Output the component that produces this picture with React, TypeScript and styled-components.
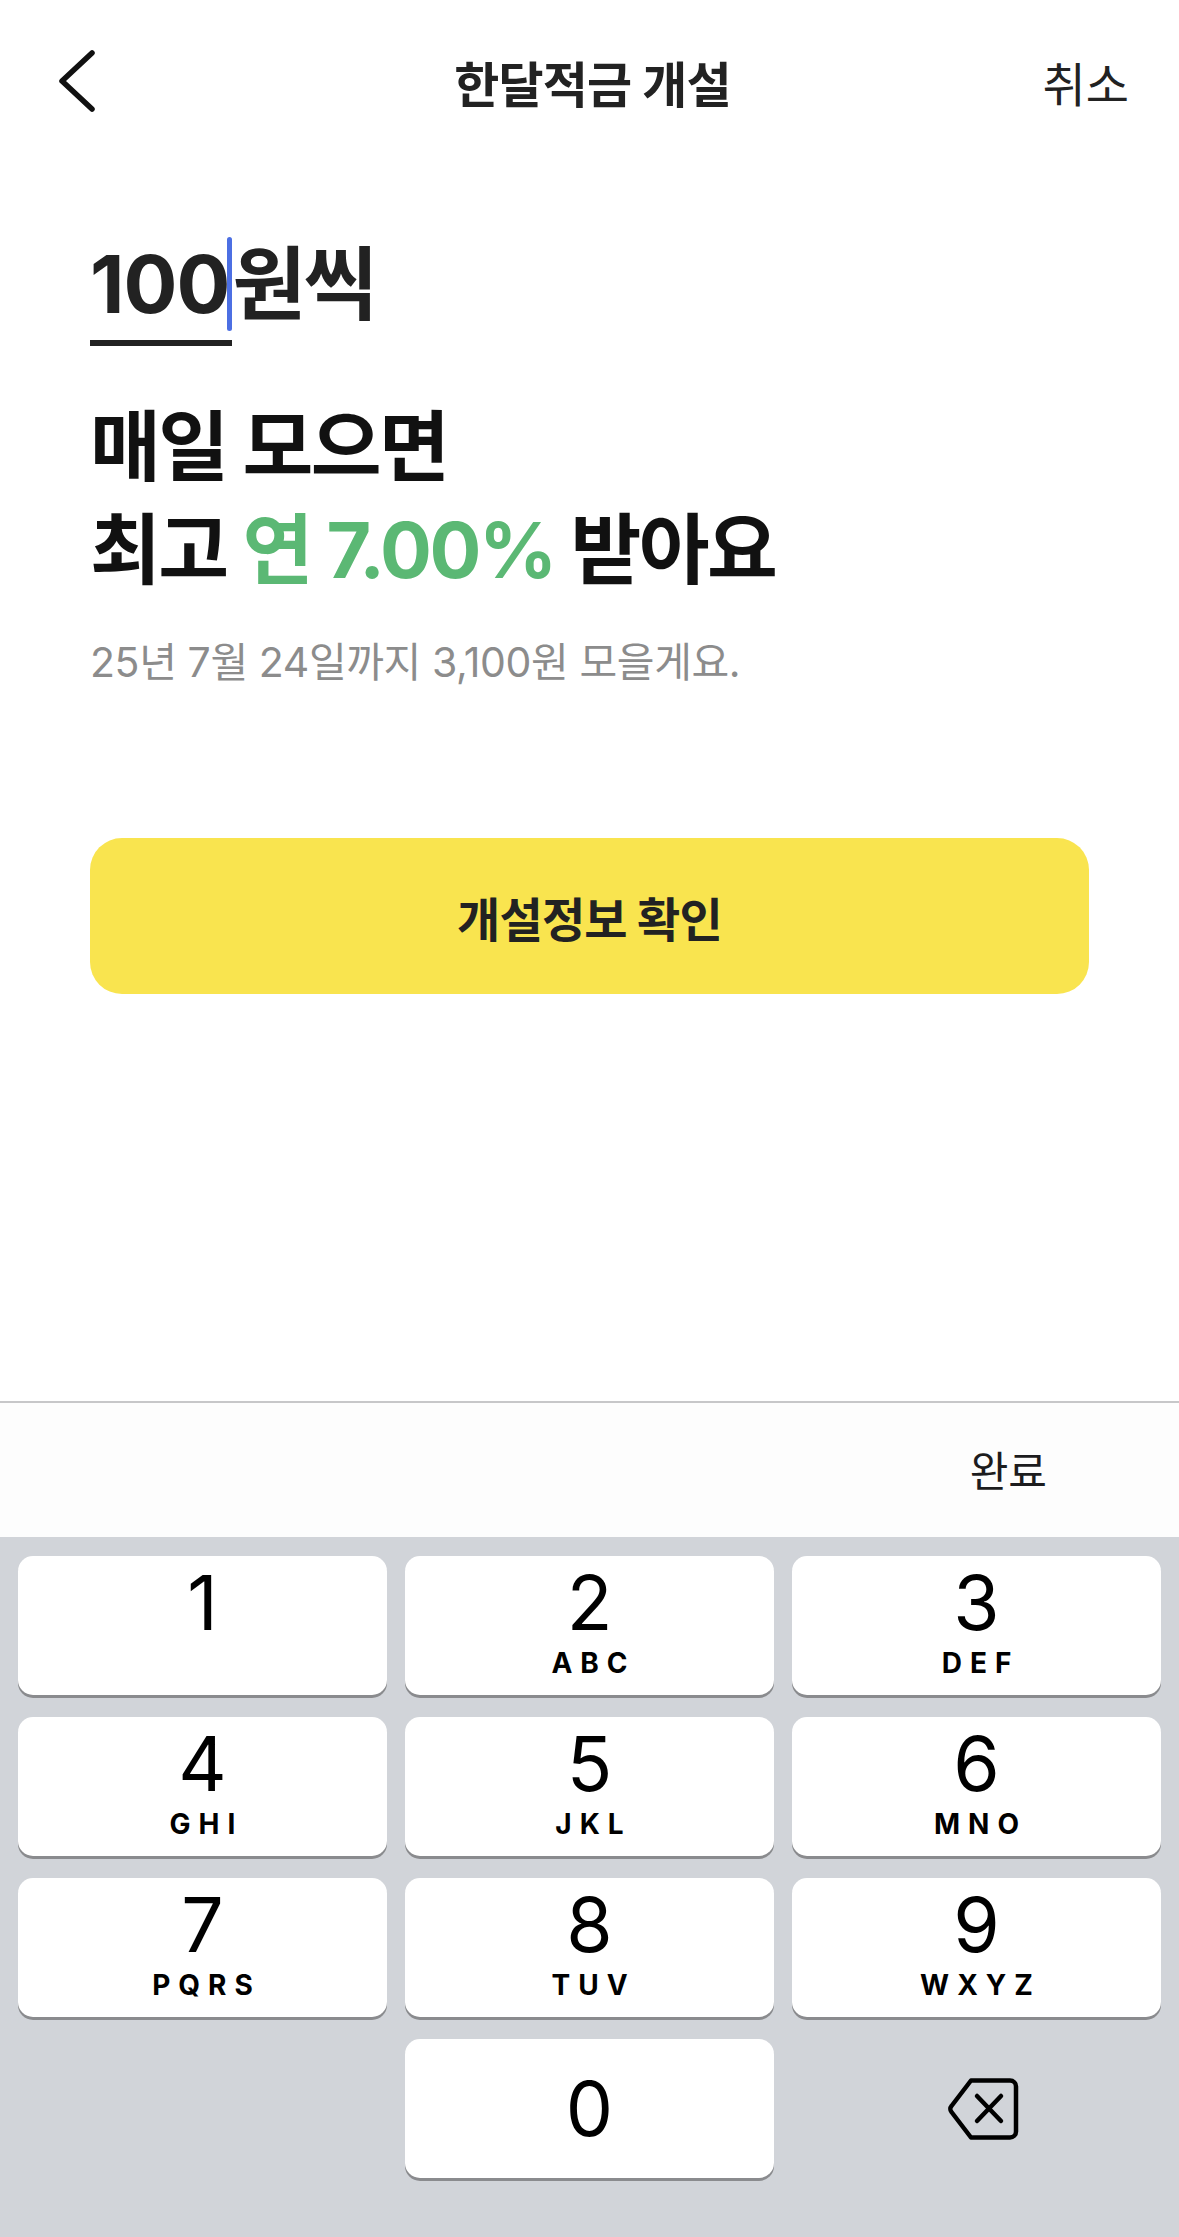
import React from "react";
import styled, { createGlobalStyle } from "styled-components";

const GlobalStyle = createGlobalStyle`
  html, body {
    margin: 0;
    padding: 0;
    background: #ffffff;
  }
  body {
    font-family: Inter, "Noto Sans CJK KR", sans-serif;
    -webkit-font-smoothing: antialiased;
  }
`;

const Screen = styled.div`
  width: 1179px;
  height: 2237px;
  display: flex;
  flex-direction: column;
  background: #ffffff;
  overflow: hidden;
`;

const NavBar = styled.header`
  height: 162px;
  display: grid;
  grid-template-columns: 200px 1fr 200px;
  align-items: center;
  padding: 0 50px 0 56px;
  box-sizing: border-box;
`;

const BackButton = styled.button`
  border: none;
  background: none;
  padding: 0;
  width: 50px;
  height: 70px;
  display: flex;
  align-items: center;
  justify-content: flex-start;
`;

const NavTitle = styled.h1`
  margin: 0;
  text-align: center;
  font-size: 49px;
  font-weight: 700;
  color: #222222;
  letter-spacing: -0.8px;
`;

const NavAction = styled.span`
  justify-self: end;
  font-size: 47px;
  font-weight: 400;
  color: #222222;
`;

const Content = styled.main`
  flex: 1;
  padding: 0 90px;
  display: flex;
  flex-direction: column;
`;

const AmountRow = styled.div`
  margin-top: 72px;
  display: flex;
  align-items: flex-start;
  font-size: 80px;
  font-weight: 700;
  color: #222222;
  line-height: 100px;
`;

const AmountInput = styled.div`
  display: flex;
  align-items: center;
  border-bottom: 6px solid #222222;
  padding-bottom: 6px;
  letter-spacing: -1px;
`;

const Caret = styled.span`
  display: inline-block;
  width: 5px;
  height: 94px;
  border-radius: 3px;
  background: #4c6fe3;
  margin-left: -2px;
`;

const Unit = styled.span`
  letter-spacing: -2.5px;
`;

const Headline = styled.h2`
  margin: 50px 0 0;
  font-size: 77px;
  font-weight: 700;
  line-height: 103px;
  color: #111111;
  letter-spacing: -2.5px;
`;

const Accent = styled.span`
  color: #5bb874;
`;

const SubText = styled.p`
  margin: 30px 0 0;
  font-size: 41px;
  line-height: 60px;
  color: #8c8c8c;
  font-weight: 400;
  letter-spacing: -0.4px;
`;

const PrimaryButton = styled.button`
  margin-top: 146px;
  height: 156px;
  width: 100%;
  border: none;
  border-radius: 32px;
  background: #f9e44f;
  font-family: inherit;
  font-size: 47px;
  font-weight: 700;
  color: #222222;
  letter-spacing: -0.8px;
`;

const Keyboard = styled.section`
  display: flex;
  flex-direction: column;
`;

const AccessoryBar = styled.div`
  height: 134px;
  border-top: 2px solid #c7c7c9;
  background: #fdfdfd;
  display: flex;
  align-items: center;
  justify-content: flex-end;
  padding-right: 132px;
`;

const DoneButton = styled.span`
  font-size: 42px;
  color: #1c1c1e;
  font-weight: 400;
  margin-top: -4px;
`;

const KeyPad = styled.div`
  height: 700px;
  box-sizing: border-box;
  background: #d1d4d9;
  padding: 19px 18px 0;
  display: grid;
  grid-template-columns: repeat(3, 1fr);
  grid-auto-rows: 139px;
  column-gap: 18px;
  row-gap: 22px;
`;

const Key = styled.div<{ $centered?: boolean }>`
  background: #ffffff;
  border-radius: 15px;
  box-shadow: 0 3px 0 #8a8b8e;
  display: flex;
  flex-direction: column;
  align-items: center;
  justify-content: ${({ $centered }) => ($centered ? "center" : "flex-start")};
  padding-top: ${({ $centered }) => ($centered ? "0" : "8px")};
  box-sizing: border-box;
  color: #000000;
`;

const KeyDigit = styled.span`
  font-size: 75px;
  font-weight: 400;
  line-height: 78px;
`;

const KeyLetters = styled.span`
  font-size: 28px;
  font-weight: 700;
  letter-spacing: 8px;
  margin-left: 8px;
  line-height: 28px;
  margin-top: 7px;
`;

const BlankKey = styled.div``;

const IconKey = styled.div`
  display: flex;
  align-items: center;
  justify-content: center;
  padding-left: 12px;
`;

const keys: [string, string][] = [
  ["1", ""],
  ["2", "ABC"],
  ["3", "DEF"],
  ["4", "GHI"],
  ["5", "JKL"],
  ["6", "MNO"],
  ["7", "PQRS"],
  ["8", "TUV"],
  ["9", "WXYZ"],
];

const ChevronLeft = () => (
  <svg width="42" height="64" viewBox="0 0 42 64" fill="none">
    <path
      d="M36 4 L6 32 L36 60"
      stroke="#111111"
      strokeWidth="5.5"
      strokeLinecap="round"
      strokeLinejoin="round"
    />
  </svg>
);

const DeleteIcon = () => (
  <svg width="72" height="62" viewBox="0 0 72 62" fill="none">
    <path
      d="M24 2.5 H63 a6 6 0 0 1 6 6 V53.5 a6 6 0 0 1 -6 6 H24 L4.5 34 a4.5 4.5 0 0 1 0 -6 Z"
      stroke="#000000"
      strokeWidth="4.5"
      strokeLinejoin="round"
    />
    <path
      d="M30 18 L54 43 M54 18 L30 43"
      stroke="#000000"
      strokeWidth="4.5"
      strokeLinecap="round"
    />
  </svg>
);

export default function App() {
  return (
    <>
      <GlobalStyle />
      <Screen>
        <NavBar>
          <BackButton aria-label="뒤로">
            <ChevronLeft />
          </BackButton>
          <NavTitle>한달적금 개설</NavTitle>
          <NavAction>취소</NavAction>
        </NavBar>

        <Content>
          <AmountRow>
            <AmountInput>
              <span>100</span>
              <Caret />
            </AmountInput>
            <Unit>원씩</Unit>
          </AmountRow>

          <Headline>
            매일 모으면
            <br />
            최고 <Accent>연 7.00%</Accent> 받아요
          </Headline>

          <SubText>25년 7월 24일까지 3,100원 모을게요.</SubText>

          <PrimaryButton>개설정보 확인</PrimaryButton>
        </Content>

        <Keyboard>
          <AccessoryBar>
            <DoneButton>완료</DoneButton>
          </AccessoryBar>
          <KeyPad>
            {keys.map(([digit, letters]) => (
              <Key key={digit}>
                <KeyDigit>{digit}</KeyDigit>
                {letters && <KeyLetters>{letters}</KeyLetters>}
              </Key>
            ))}
            <BlankKey />
            <Key $centered>
              <KeyDigit>0</KeyDigit>
            </Key>
            <IconKey>
              <DeleteIcon />
            </IconKey>
          </KeyPad>
        </Keyboard>
      </Screen>
    </>
  );
}
